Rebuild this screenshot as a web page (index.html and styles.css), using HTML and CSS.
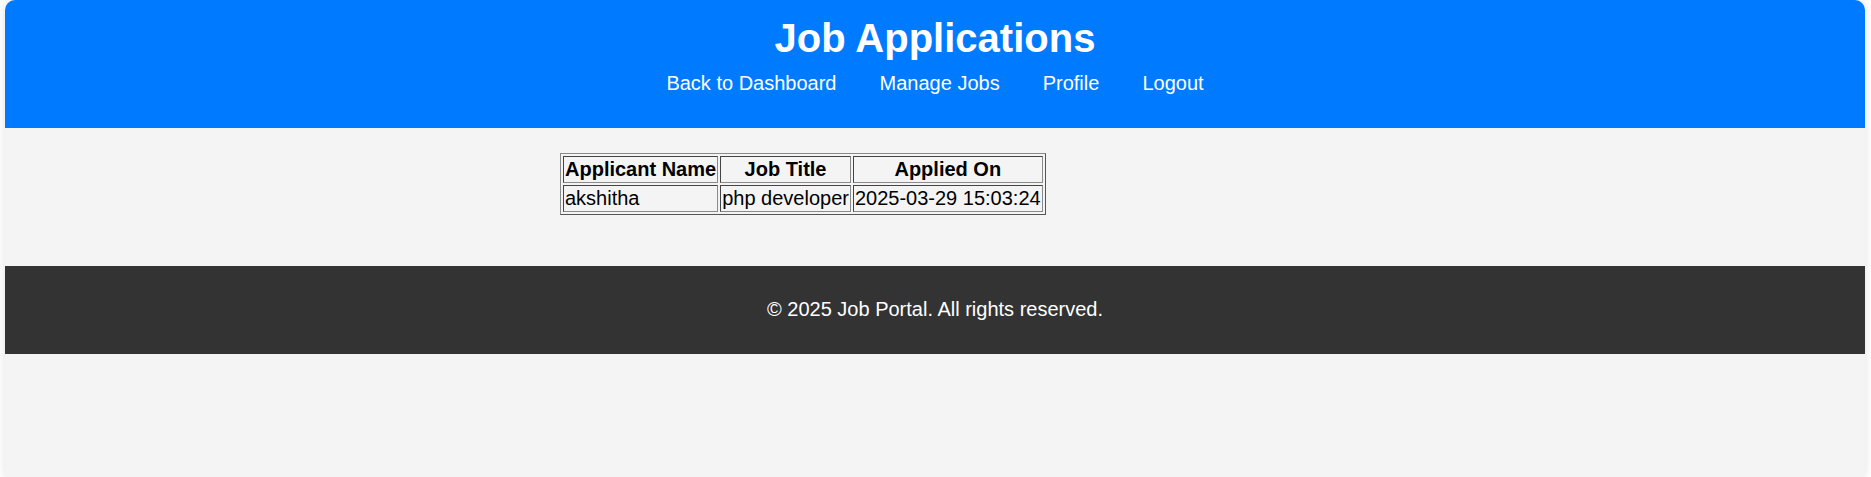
FILE: index.html
```html
<!DOCTYPE html>
<html lang="en">
<head>
<meta charset="utf-8">
<title>Job Applications</title>
<link rel="stylesheet" href="styles.css">
</head>
<body>
<div class="page">
  <header class="site-header">
    <h1 class="site-title">Job Applications</h1>
    <nav class="site-nav">
      <a href="#">Back to Dashboard</a>
      <a href="#">Manage Jobs</a>
      <a href="#">Profile</a>
      <a href="#">Logout</a>
    </nav>
  </header>
  <main class="content">
    <table class="apps">
      <thead>
        <tr>
          <th>Applicant Name</th>
          <th>Job Title</th>
          <th>Applied On</th>
        </tr>
      </thead>
      <tbody>
        <tr>
          <td>akshitha</td>
          <td>php developer</td>
          <td>2025-03-29 15:03:24</td>
        </tr>
      </tbody>
    </table>
  </main>
  <footer class="site-footer">
    <p class="copy">&copy; 2025 Job Portal. All rights reserved.</p>
  </footer>
</div>
</body>
</html>
```

FILE: styles.css
```css
html, body {
  margin: 0;
  padding: 0;
}

body {
  background: #ffffff;
  font-family: "Liberation Sans", Arial, sans-serif;
  font-size: 20px;
  color: #000;
}

.page {
  margin: 0 6px 0 5px;
  min-height: 100vh;
  box-sizing: border-box;
  background: #f4f4f4;
  border-radius: 10px 10px 0 0;
  overflow: hidden;
  box-shadow: 0 0 10px rgba(0, 0, 0, 0.12);
}

.site-header {
  background: #007bff;
  color: #fff;
  text-align: center;
  padding: 15px 0 33px;
}

.site-title {
  margin: 0 0 11px;
  font-size: 40px;
  font-weight: bold;
  line-height: 46px;
}

.site-nav {
  line-height: 23px;
}

.site-nav a {
  color: #fff;
  text-decoration: none;
  margin: 0 18.75px;
}

.content {
  width: 750px;
  margin: 0 auto;
  padding: 25px 0 51px;
}

.apps {
  border: 1px solid;
  border-color: #8a8a8a #555555 #555555 #8a8a8a;
  border-spacing: 2px;
  font-size: 20px;
}

.apps th,
.apps td {
  border: 1px solid;
  border-color: #444444 #8a8a8a #8a8a8a #444444;
  padding: 1px;
  line-height: 23px;
}

.apps th {
  font-weight: bold;
  text-align: center;
}

.apps td {
  text-align: left;
}

.site-footer {
  background: #333333;
  color: #fff;
  text-align: center;
  padding: 32px 0 33px;
}

.copy {
  margin: 0;
  line-height: 23px;
}
```
